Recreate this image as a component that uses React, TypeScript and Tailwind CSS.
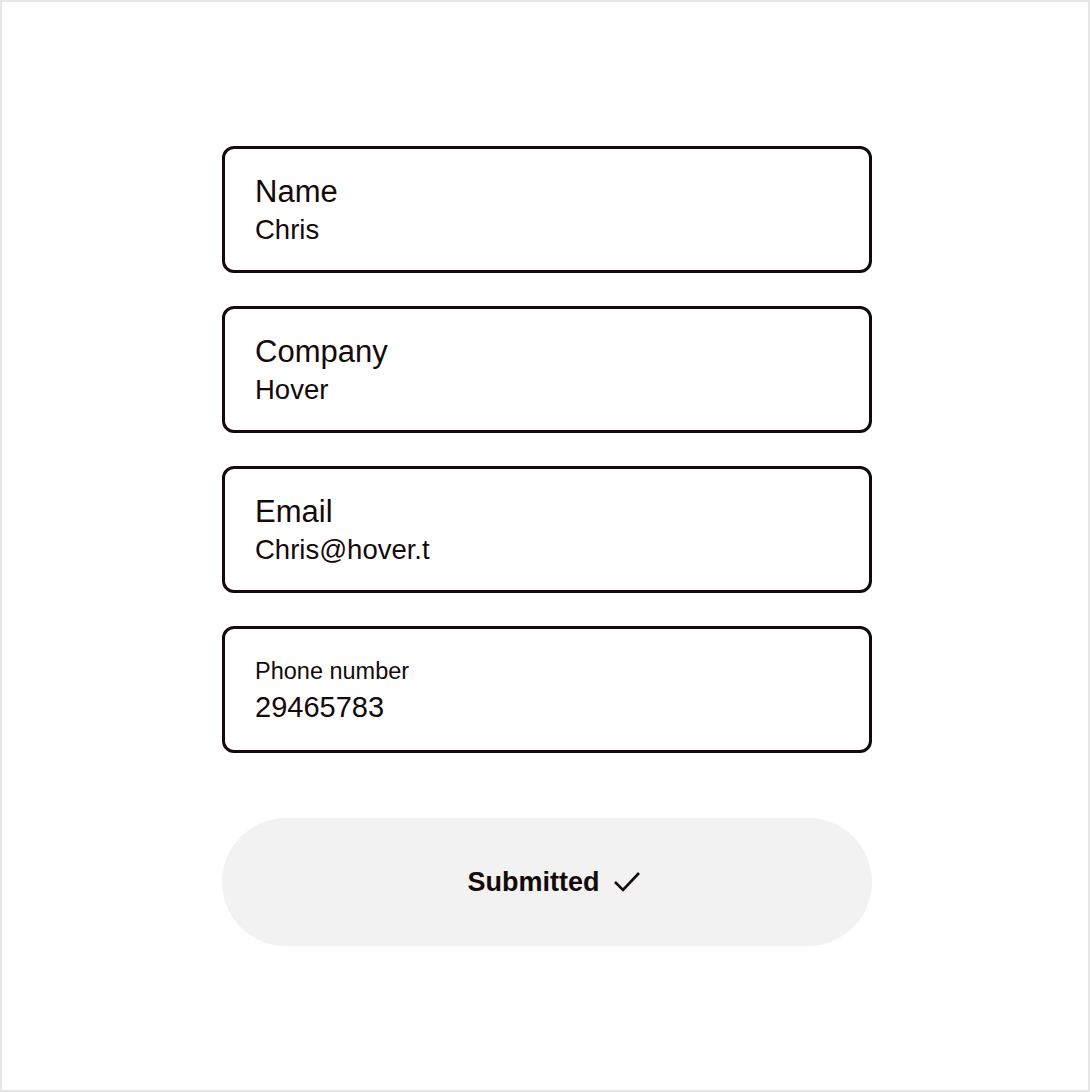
const fields = [
  { label: 'Name', value: 'Chris', small: false },
  { label: 'Company', value: 'Hover', small: false },
  { label: 'Email', value: 'Chris@hover.t', small: false },
  { label: 'Phone number', value: '29465783', small: true },
];

export default function App() {
  return (
    <div className="h-[1092px] w-full border-2 border-[#e6e6e6] bg-white font-['Liberation_Sans',Arial,sans-serif] text-[#140a0a]">
      <div className="ml-[220px] flex w-[650px] flex-col gap-[33px] pt-[144px]">
        {fields.map((f) => (
          <div
            key={f.label}
            className="flex h-[127px] flex-col justify-center rounded-[12px] border-[3px] border-[#140a0a] px-[30px]"
          >
            {f.small ? (
              <>
                <span className="text-[23.5px] leading-[28px]">{f.label}</span>
                <span className="mt-[6px] text-[29px] leading-[32px]">{f.value}</span>
              </>
            ) : (
              <>
                <span className="text-[31px] leading-[34px]">{f.label}</span>
                <span className="mt-[6px] text-[27.5px] leading-[30px]">{f.value}</span>
              </>
            )}
          </div>
        ))}
        <button className="mt-[32px] flex h-[128px] items-center justify-center gap-[13px] rounded-full bg-[#f2f2f2] pl-[14px]">
          <span className="text-[27px] font-bold">Submitted</span>
          <svg width="28" height="24" viewBox="0 0 28 24" fill="none">
            <path d="M2 12 L10 20 L26 3" stroke="#140a0a" strokeWidth="2.6" />
          </svg>
        </button>
      </div>
    </div>
  );
}
